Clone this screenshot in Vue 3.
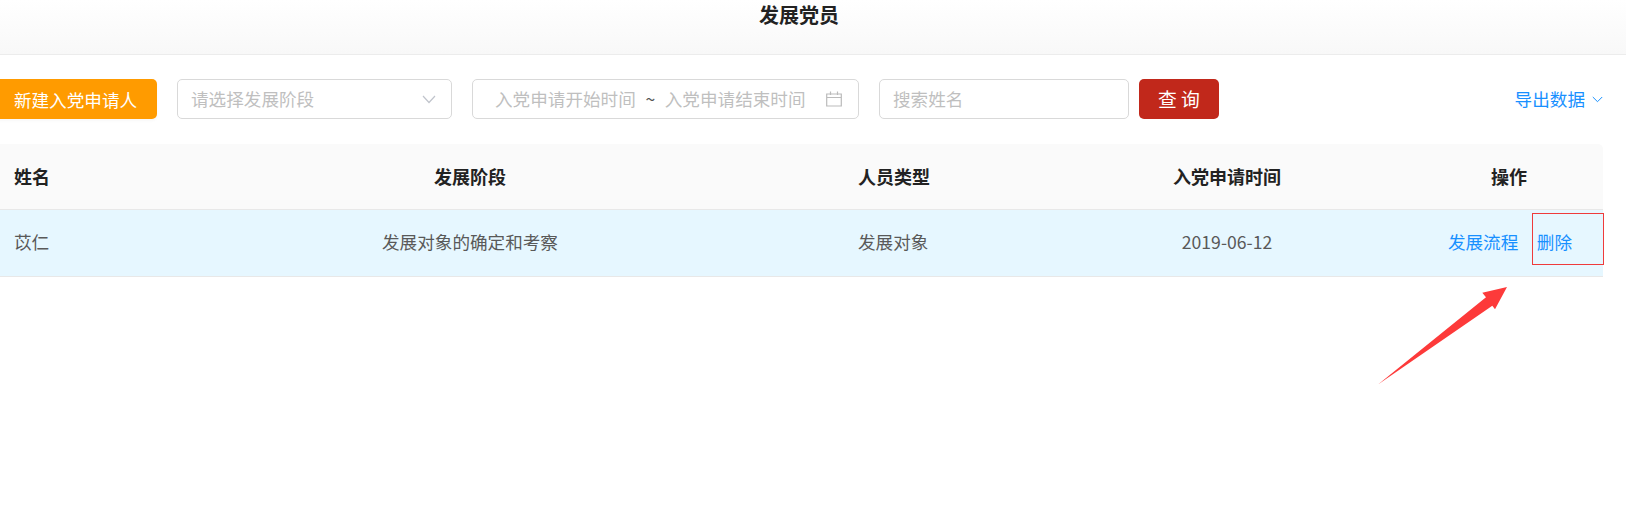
<script setup>
const cols = ['col-name', 'col-stage', 'col-type', 'col-date', 'col-op']
const heads = ['姓名', '发展阶段', '人员类型', '入党申请时间', '操作']
const cells = ['苡仁', '发展对象的确定和考察', '发展对象', '2019-06-12']
</script>

<template>
  <div class="page">
    <header class="title-bar"><h1 class="title">发展党员</h1></header>
    <div class="toolbar">
      <button class="btn-new">新建入党申请人</button>
      <div class="field select">
        <span class="ph">请选择发展阶段</span>
        <svg class="chev" width="14" height="9" viewBox="0 0 14 9"><path d="M1 1l6 6.500L13 1" fill="none" stroke="#c0c4cc" stroke-width="1.200"/></svg>
      </div>
      <div class="field date">
        <span class="ph">入党申请开始时间</span>
        <span class="tilde">~</span>
        <span class="ph">入党申请结束时间</span>
        <svg class="cal" width="16" height="16" viewBox="0 0 16 16"><path d="M.7 3h14.600v12H.7zM.7 6.500h14.600M4.500 .5v3.500M11.500 .5v3.500" fill="none" stroke="#bbb" stroke-width="1.200"/></svg>
      </div>
      <div class="field search"><span class="ph">搜索姓名</span></div>
      <button class="btn-query">查 询</button>
      <a class="export">导出数据
        <svg width="11" height="7" viewBox="0 0 11 7"><path d="M.8 1l4.700 4.700L10.200 1" fill="none" stroke="#1890ff" stroke-width="1"/></svg>
      </a>
    </div>
    <div class="table">
      <div class="row head">
        <div v-for="(h, i) in heads" :key="h" :class="cols[i]">{{ h }}</div>
      </div>
      <div class="row body">
        <div v-for="(c, i) in cells" :key="c" :class="cols[i]">{{ c }}</div>
        <div class="col-op ops"><a>发展流程</a><a>删除</a></div>
      </div>
    </div>
    <div class="mark-box"></div>
    <svg class="mark-arrow" width="140" height="110" viewBox="0 0 140 110">
      <polygon points="0,105.500 108,18.300 104.300,13.700 129,8 117,30.300 114.300,26.700" fill="#fd3a3a"/>
    </svg>
  </div>
</template>

<style>
html, body { margin: 0; background: #fff; overflow: hidden; }
</style>

<style scoped>
.page { position: relative; width: 1626px; height: 515px; overflow: hidden; background: #fff; color: #333; font-family: "Noto Sans CJK SC", "Liberation Sans", sans-serif; font-size: 17.6px; }
.title-bar { box-sizing: border-box; height: 55px; border-bottom: 1px solid #ececec; background: linear-gradient(#fff, #f8f8f8); text-align: center; padding-right: 28px; }
.title { margin: 0; font-size: 20px; font-weight: 700; line-height: 30px; color: #222; }
.toolbar { display: flex; align-items: center; height: 40px; margin-top: 24px; }
.btn-new { width: 163px; height: 40px; margin-left: -6px; padding: 0; border: 0; border-radius: 5px; background: #ff9b00; color: #fff; font: inherit; box-shadow: 0 2px 3px rgba(0, 0, 0, .03); flex: none; }
.field { box-sizing: border-box; height: 40px; display: flex; align-items: center; border: 1px solid #d9d9d9; border-radius: 5px; padding: 0 13px 2px; flex: none; }
.ph { color: #bfbfbf; }
.select { width: 275px; margin-left: 20px; justify-content: space-between; padding-right: 15px; }
.chev { margin-top: 2px; }
.date { width: 387px; margin-left: 20px; padding-left: 22px; padding-right: 16px; }
.tilde { width: 29px; text-align: center; color: #555; }
.cal { margin-left: auto; margin-top: 2px; }
.search { width: 250px; margin-left: 20px; }
.btn-query { width: 80px; height: 40px; margin-left: 10px; border: 0; border-radius: 5px; background: #c1281b; color: #fff; font: inherit; font-size: 18.800px; padding: 0 0 2px; flex: none; }
.export { margin-left: auto; margin-right: 23px; padding-bottom: 2px; color: #1890ff; display: flex; align-items: center; gap: 7px; }
.export svg { margin-top: 3px; }
.table { width: 1603px; margin-top: 25px; }
.row { display: flex; align-items: center; box-sizing: border-box; }
.head { height: 66px; padding-bottom: 1px; background: #fafafa; border-bottom: 1px solid #e8e8e8; border-top-right-radius: 5px; font-size: 18px; font-weight: 700; color: #222; }
.body { height: 67px; padding-bottom: 3px; background: #e6f7ff; border-bottom: 1px solid #e8e8e8; color: #595959; }
.col-name { width: 82px; padding-left: 14px; }
.col-stage { width: 748px; text-align: center; }
.col-type { width: 181px; padding-left: 14px; }
.col-date { width: 376px; text-align: center; }
.col-op { width: 188px; text-align: center; }
.ops { display: flex; justify-content: flex-end; gap: 18.500px; color: #1890ff; padding-right: 31px; box-sizing: border-box; }
.mark-box { position: absolute; left: 1532px; top: 213px; width: 70px; height: 50px; border: 1px solid #ef3b3b; }
.mark-arrow { position: absolute; left: 1378px; top: 279px; }
</style>
